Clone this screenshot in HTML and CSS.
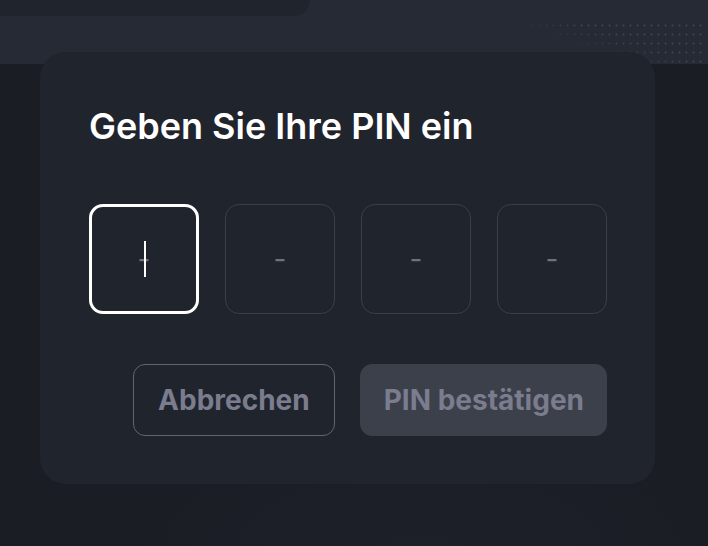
FILE: index.html
```html
<!DOCTYPE html>
<html lang="de">
<head>
<meta charset="utf-8">
<title>PIN</title>
<link rel="stylesheet" href="styles.css">
</head>
<body>
<div class="band">
  <div class="top-panel"></div>
  <div class="dots"></div>
</div>
<main class="stage">
  <section class="card">
    <h1 class="title">Geben Sie Ihre PIN ein</h1>
    <div class="pins">
      <div class="pin active"><span class="ph">-</span><span class="caret"></span></div>
      <div class="pin"><span class="ph">-</span></div>
      <div class="pin"><span class="ph">-</span></div>
      <div class="pin"><span class="ph">-</span></div>
    </div>
    <div class="actions">
      <button class="btn btn-ghost">Abbrechen</button>
      <button class="btn btn-solid">PIN bestätigen</button>
    </div>
  </section>
</main>
</body>
</html>
```

FILE: styles.css
```css
* { box-sizing: border-box; }
html, body { margin: 0; height: 100%; }
body {
  background: radial-gradient(ellipse 300px 120px at 420px 546px, #1d2028 0%, #1a1d24 100%), #1a1d24;
  font-family: Inter, "Noto Sans", sans-serif;
  position: relative;
  overflow: hidden;
}
.band {
  height: 64px;
  background: #252a35;
  position: relative;
}
.top-panel {
  width: 310px;
  height: 16px;
  background: #20242d;
  border-bottom-right-radius: 16px;
}
.dots {
  position: absolute;
  right: 4px;
  top: 21px;
  width: 196px;
  height: 43px;
  background-image: radial-gradient(circle, #4a5060 0.8px, transparent 1.2px);
  background-size: 7px 9px;
  -webkit-mask-image: linear-gradient(200deg, #000 40%, transparent 65%);
  mask-image: linear-gradient(200deg, #000 40%, transparent 65%);
  opacity: 0.7;
}
.stage {
  position: absolute;
  left: 40px;
  top: 52px;
}
.card {
  width: 615px;
  height: 432px;
  background: #20242d;
  border-radius: 26px;
  padding: 52px 48px 48px 49px;
  display: flex;
  flex-direction: column;
}
.title {
  margin: 0;
  color: #ffffff;
  font-size: 36px;
  font-weight: 600;
  line-height: 44px;
  letter-spacing: 0;
}
.pins {
  margin-top: 56px;
  display: flex;
  gap: 26px;
}
.pin {
  width: 110px;
  height: 110px;
  border: 1px solid #3a3e4a;
  border-radius: 14px;
  display: flex;
  align-items: center;
  justify-content: center;
  position: relative;
}
.pin.active {
  border: 3px solid #ffffff;
}
.ph {
  color: #6c7080;
  font-size: 28px;
  line-height: 1;
}
.caret {
  position: absolute;
  left: 50%;
  top: 50%;
  width: 2px;
  height: 36px;
  transform: translateY(-50%);
  background: #ffffff;
}
.actions {
  margin-top: 50px;
  display: flex;
  justify-content: flex-end;
  gap: 25px;
}
.btn {
  height: 72px;
  border-radius: 12px;
  font-family: Inter, "Noto Sans", sans-serif;
  font-size: 28px;
  font-weight: 700;
  color: #7b7c8d;
  padding: 0 24px;
  cursor: default;
}
.btn-ghost {
  background: transparent;
  border: 1px solid #62656f;
}
.btn-solid {
  background: #3b404b;
  border: 1px solid #3b404b;
  padding: 0 22px 0 23px;
}
```
